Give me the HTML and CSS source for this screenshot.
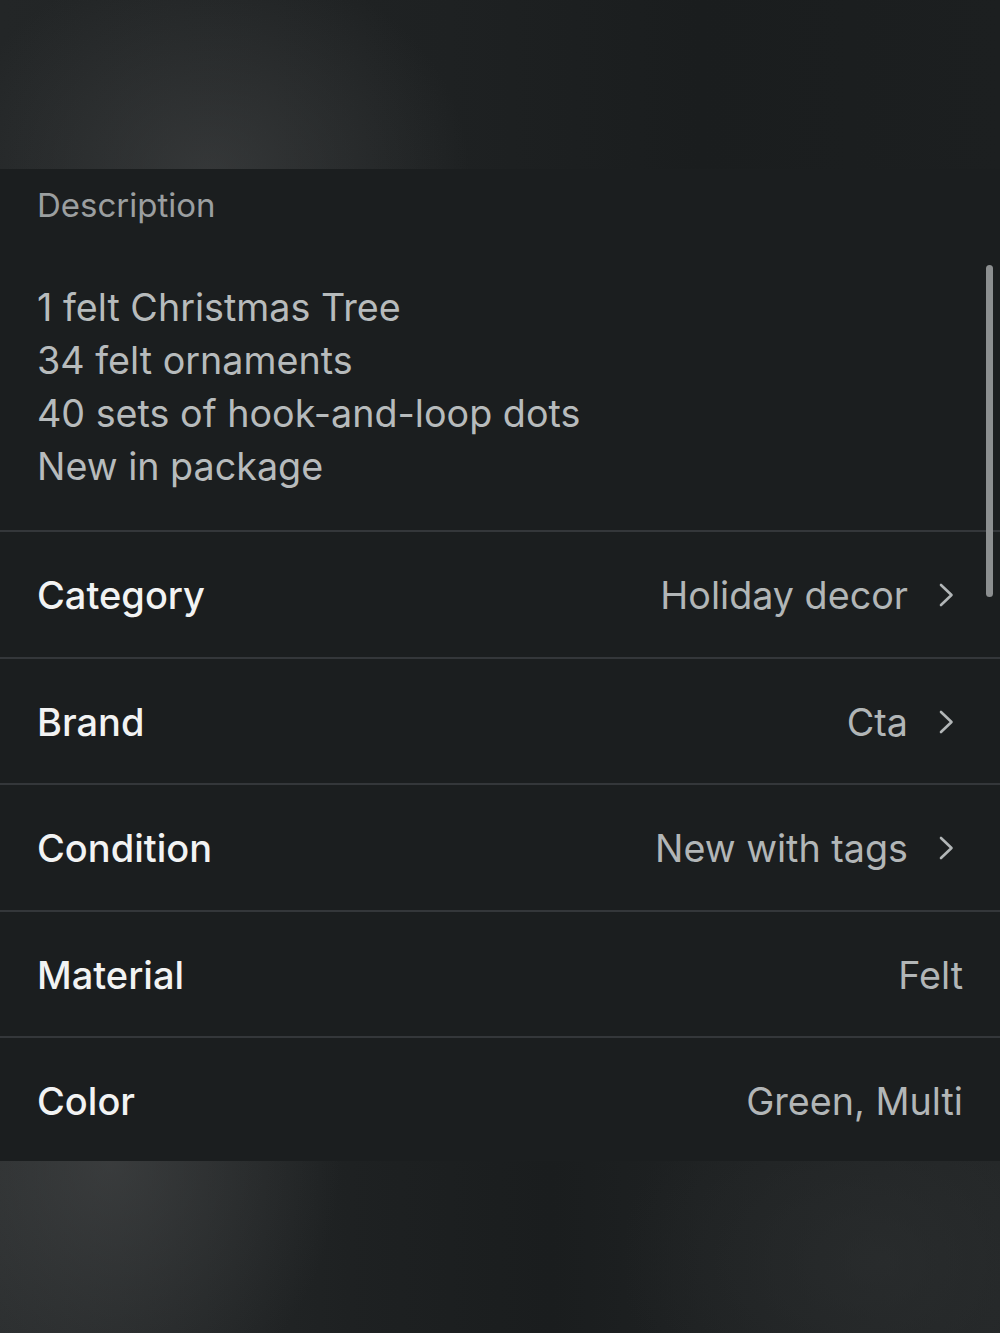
FILE: index.html
```html
<!DOCTYPE html>
<html>
<head>
<meta charset="utf-8">
<link rel="stylesheet" href="styles.css">
</head>
<body>
<div class="screen">
  <div class="backdrop top"></div>
  <div class="panel">
    <section class="desc">
      <div class="desc-label">Description</div>
      <div class="desc-text">
        <div>1 felt Christmas Tree</div>
        <div>34 felt ornaments</div>
        <div>40 sets of hook-and-loop dots</div>
        <div>New in package</div>
      </div>
    </section>
    <div class="row">
      <span class="label">Category</span>
      <span class="value">Holiday decor</span>
      <svg class="chev" viewBox="0 0 26 26"><path d="M4 3 L14.5 13 L4 23" fill="none" stroke="currentColor" stroke-width="2.6" stroke-linecap="round" stroke-linejoin="round"/></svg>
    </div>
    <div class="row">
      <span class="label">Brand</span>
      <span class="value">Cta</span>
      <svg class="chev" viewBox="0 0 26 26"><path d="M4 3 L14.5 13 L4 23" fill="none" stroke="currentColor" stroke-width="2.6" stroke-linecap="round" stroke-linejoin="round"/></svg>
    </div>
    <div class="row">
      <span class="label">Condition</span>
      <span class="value">New with tags</span>
      <svg class="chev" viewBox="0 0 26 26"><path d="M4 3 L14.5 13 L4 23" fill="none" stroke="currentColor" stroke-width="2.6" stroke-linecap="round" stroke-linejoin="round"/></svg>
    </div>
    <div class="row">
      <span class="label">Material</span>
      <span class="value">Felt</span>
    </div>
    <div class="row last">
      <span class="label">Color</span>
      <span class="value">Green, Multi</span>
    </div>
    <div class="scrollbar"></div>
  </div>
  <div class="backdrop bottom"></div>
</div>
</body>
</html>
```
FILE: styles.css
```css
html, body {
  margin: 0;
  padding: 0;
  background: #1b1e1f;
}
.screen {
  width: 1000px;
  height: 1333px;
  display: flex;
  flex-direction: column;
  overflow: hidden;
  font-family: Inter, "Noto Sans", sans-serif;
}
.backdrop {
  flex: none;
}
.backdrop.top {
  height: 169px;
  background:
    radial-gradient(ellipse 260px 220px at 210px 175px, rgba(70,72,73,0.55), rgba(70,72,73,0) 100%),
    linear-gradient(90deg, #232627 0%, #1e2122 45%, #1a1d1e 70%, #1c1f20 100%);
}
.backdrop.bottom {
  flex: 1;
  background:
    radial-gradient(ellipse 230px 260px at 110px 0px, rgba(70,72,73,0.6), rgba(70,72,73,0) 100%),
    radial-gradient(ellipse 260px 200px at 880px 100px, rgba(45,48,49,0.6), rgba(45,48,49,0) 100%),
    linear-gradient(90deg, #2a2d2e 0%, #1e2122 35%, #1a1d1e 55%, #1e2122 70%, #232627 100%);
}
.panel {
  position: relative;
  flex: none;
  background: #1b1e1f;
}
.desc {
  padding: 14px 37px 37px;
}
.desc-label {
  font-size: 33px;
  line-height: 44px;
  color: #9b9fa0;
  font-weight: 400;
}
.desc-text {
  margin-top: 54px;
  font-size: 37.7px;
  line-height: 53px;
  color: #b7bbbc;
  font-weight: 400;
}
.row {
  box-sizing: border-box;
  height: 126.5px;
  border-top: 2px solid #34373a;
  display: flex;
  align-items: center;
  padding: 2px 37px 0;
}
.row.last {
  height: 125px;
}
.label {
  font-size: 38px;
  font-weight: 500;
  color: #f2f3f3;
  flex: 1;
}
.value {
  font-size: 37.7px;
  color: #b2b6b7;
  font-weight: 400;
}
.chev {
  width: 26px;
  height: 26px;
  margin-left: 29px;
  color: #b2b6b7;
}
.scrollbar {
  position: absolute;
  left: 986px;
  top: 96px;
  width: 7px;
  height: 332px;
  border-radius: 4px;
  background: #8c8f90;
}
```
